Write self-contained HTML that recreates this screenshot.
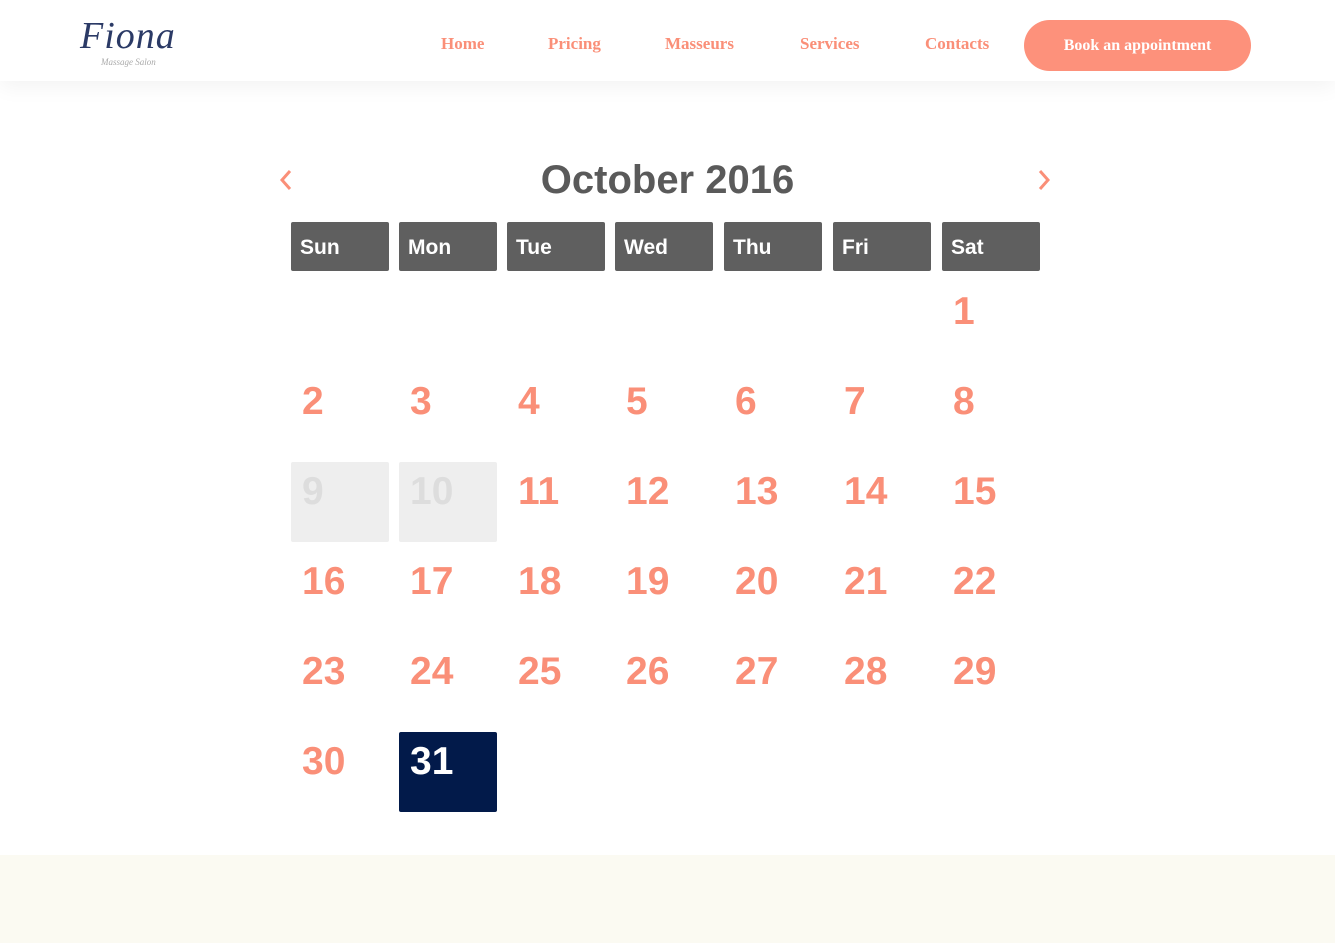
<!DOCTYPE html>
<html><head><style>
*{margin:0;padding:0;box-sizing:border-box}
body{width:1335px;height:943px;background:#fff;position:relative;overflow:hidden;font-family:"Liberation Sans",Arial,sans-serif}
.hdr{position:absolute;left:0;top:0;width:1335px;height:81px;background:#fff;box-shadow:0 6px 20px rgba(0,0,0,0.05);z-index:2}
.logo{position:absolute;left:80px;top:14px;font-family:"Liberation Serif",serif;font-style:italic;font-size:38px;color:#2b3a66;letter-spacing:1px}
.sub{position:absolute;left:101px;top:57px;font-size:9px;color:#aaa;font-style:italic;font-family:"Liberation Serif",serif}
.nav a{position:absolute;top:34px;font-family:"Liberation Serif",serif;font-size:17px;font-weight:bold;color:#fa8f78;text-decoration:none}
.btn{position:absolute;left:1024px;top:20px;width:227px;height:51px;border-radius:26px;background:#fd917b;color:#fff;font-family:"Liberation Serif",serif;font-size:16px;font-weight:bold;text-align:center;line-height:51px}
.title{position:absolute;left:0;width:1335px;top:158px;text-align:center;font-size:40px;font-weight:bold;color:#5a5a5a}
.arr{position:absolute;top:168px}
.h{position:absolute;top:222px;width:98px;height:49px;background:#5f5f5f;border-radius:2px;color:#fff;font-weight:bold;font-size:21px;padding:14px 0 0 9px}
.d{position:absolute;width:98px;height:80px;color:#fa8f78;font-weight:bold;font-size:39px;padding:8px 0 0 11px;border-radius:2px}
.g{background:#eee;color:#ddd}
.s{background:#021a4a;color:#fff}
.foot{position:absolute;left:0;top:855px;width:1335px;height:88px;background:#fbfaf2}
</style></head><body>
<div class="hdr">
<div class="logo">Fiona</div><div class="sub">Massage Salon</div>
<div class="nav"><a style="left:441px">Home</a><a style="left:548px">Pricing</a><a style="left:665px">Masseurs</a><a style="left:800px">Services</a><a style="left:925px">Contacts</a></div>
<div class="btn">Book an appointment</div>
</div>
<div class="title">October 2016</div>
<svg class="arr" style="left:279px" width="14" height="24"><path d="M11 3 L3 12 L11 21" stroke="#fa8f78" stroke-width="3" fill="none"/></svg>
<svg class="arr" style="left:1037px" width="14" height="24"><path d="M3 3 L11 12 L3 21" stroke="#fa8f78" stroke-width="3" fill="none"/></svg>
<div id="c"></div>
<div class="foot"></div>
<script>
var xs=[291,399,507,615,724,833,942],n=["Sun","Mon","Tue","Wed","Thu","Fri","Sat"],h="";
for(var i=0;i<7;i++)h+='<div class="h" style="left:'+xs[i]+'px">'+n[i]+'</div>';
for(var d=1;d<=31;d++){var p=d+5,r=Math.floor(p/7),c=p%7;var cl=(d==9||d==10)?" g":(d==31?" s":"");
h+='<div class="d'+cl+'" style="left:'+xs[c]+'px;top:'+(282+r*90)+'px">'+d+'</div>';}
document.getElementById("c").innerHTML=h;
</script>
</body></html>
